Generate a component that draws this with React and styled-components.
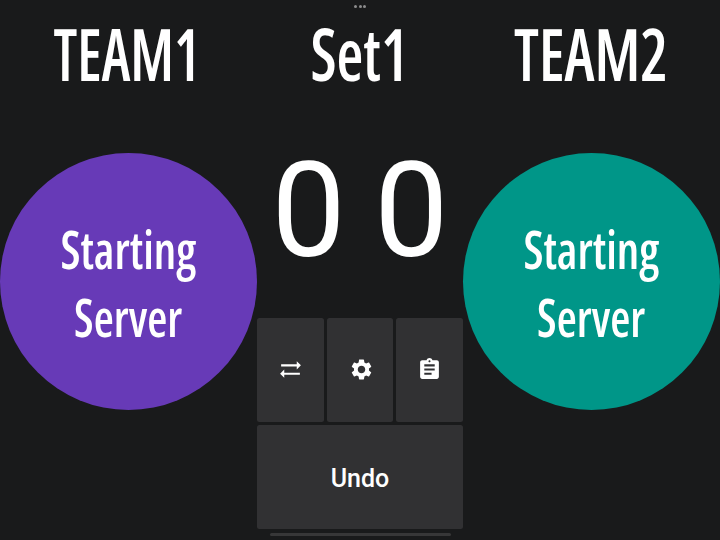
import styled, { createGlobalStyle } from 'styled-components';
import { MdAssignment, MdSettings, MdSyncAlt } from 'react-icons/md';

const GlobalStyle = createGlobalStyle`
  body {
    margin: 0;
    background: #191a1b;
  }
`;

const Screen = styled.main`
  position: relative;
  width: 720px;
  height: 540px;
  overflow: hidden;
  box-sizing: border-box;
  background: #191a1b;
  color: #fff;
  display: grid;
  grid-template-columns: 5fr 4fr 5fr;
  grid-template-rows: 108px 1fr;
`;

const Dots = styled.div`
  position: absolute;
  top: 5px;
  left: 354px;
  display: flex;
  gap: 1.5px;

  i {
    width: 3px;
    height: 3px;
    border-radius: 50%;
    background: #8c8c8d;
  }
`;

const HomeBar = styled.div`
  position: absolute;
  left: 270px;
  bottom: 4px;
  width: 181px;
  height: 3px;
  border-radius: 2px;
  background: #373738;
`;

/* narrow display face, squeezed a bit further per word */
const Condensed = styled.span`
  display: block;
  font-family: 'Open Sans', sans-serif;
  font-stretch: 75%;
  font-weight: 600;
  white-space: nowrap;
  transform: translateX(${({ $shift }) => $shift || 0}px) scaleX(${({ $squeeze }) => $squeeze});
`;

const Heading = styled.h1`
  margin: 0;
  display: flex;
  justify-content: center;
  font-size: 71.5px;
  line-height: 108px;
`;

const Side = styled.div`
  padding-top: 45.3px;
`;

const Server = styled.button`
  width: 100%;
  aspect-ratio: 1;
  padding: 3px 0 0;
  border: 0;
  border-radius: 50%;
  background: ${({ $color }) => $color};
  color: #fff;
  display: flex;
  flex-direction: column;
  align-items: center;
  justify-content: center;
  font-size: 53px;
  line-height: 68.5px;
`;

const Middle = styled.div`
  display: flex;
  flex-direction: column;
`;

const Scores = styled.div`
  height: 209.6px;
  display: grid;
  grid-template-columns: 1fr 1fr;
  font: 400 132px/206px Roboto, sans-serif;
  text-align: center;
`;

const Controls = styled.div`
  display: grid;
  grid-template-columns: repeat(3, 1fr);
  grid-auto-rows: 104.6px;
  gap: 2.7px;
`;

const Control = styled.button`
  grid-column: span ${({ $span }) => $span || 1};
  padding: ${({ $drop }) => $drop || 0}px 0 0 ${({ $inset }) => $inset || 0}px;
  border: 0;
  border-radius: 2.5px;
  background: #313133;
  color: #fff;
  display: flex;
  align-items: center;
  justify-content: center;
  font: 500 25px/1 Roboto, sans-serif;
`;

function ServerButton({ color }) {
  return (
    <Side>
      <Server $color={color}>
        <Condensed $squeeze={0.89}>Starting</Condensed>
        <Condensed $squeeze={0.87}>Server</Condensed>
      </Server>
    </Side>
  );
}

export default function App() {
  return (
    <>
      <GlobalStyle />
      <Screen>
        <Heading><Condensed $squeeze={0.825} $shift={-2}>TEAM1</Condensed></Heading>
        <Heading><Condensed $squeeze={0.86} $shift={-0.5}>Set1</Condensed></Heading>
        <Heading><Condensed $squeeze={0.865}>TEAM2</Condensed></Heading>

        <ServerButton color="#673ab7" />
        <Middle>
          <Scores>
            <span>0</span>
            <span>0</span>
          </Scores>
          <Controls>
            <Control aria-label="Swap sides"><MdSyncAlt size={25} /></Control>
            <Control aria-label="Settings" $inset={4}><MdSettings size={25} /></Control>
            <Control aria-label="Records"><MdAssignment size={25} /></Control>
            <Control $span={3} $drop={2}>Undo</Control>
          </Controls>
        </Middle>
        <ServerButton color="#009688" />

        <Dots><i /><i /><i /></Dots>
        <HomeBar />
      </Screen>
    </>
  );
}
